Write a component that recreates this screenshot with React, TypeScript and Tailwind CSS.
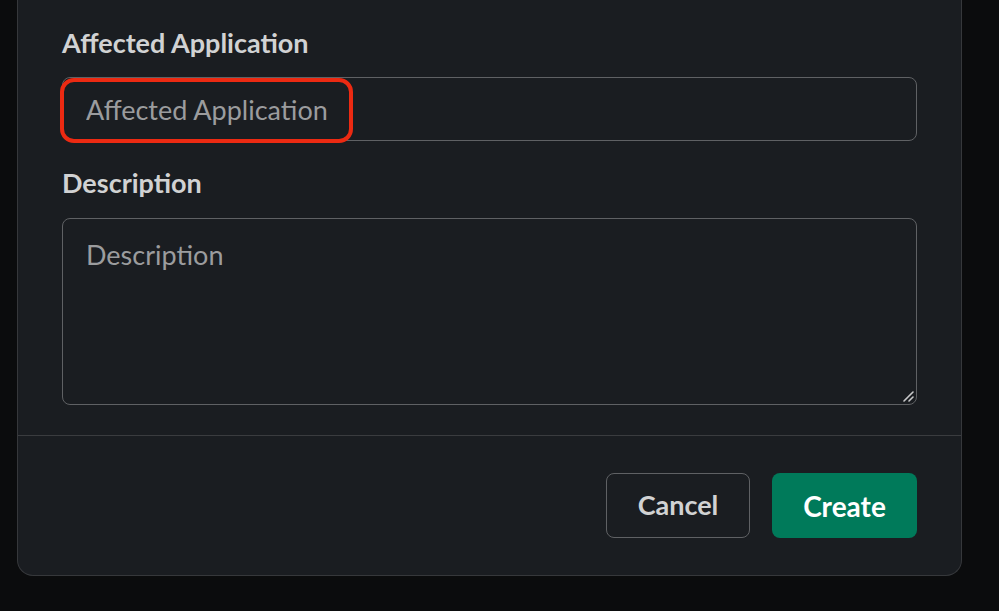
export default function App() {
    return (
        <div
            className="h-[611px] w-[999px] overflow-hidden bg-[#0b0c0d]"
            style={{ fontFamily: 'Lato, "Open Sans", sans-serif' }}
        >
            <div className="ml-[17px] w-[945px] rounded-b-[16px] border-x border-b border-[#36383b] bg-[#1a1d21]">
                <div className="px-[44px] pt-[27px] pb-[30px]">
                    <label className="block text-[27px] leading-[32px] font-bold text-[#d1d2d3]">
                        Affected Application
                    </label>
                    <div className="relative mt-[18px]">
                        <input
                            className="block h-[64px] w-full rounded-[8px] border border-[#5f6164] bg-transparent px-[23px] text-[27px] text-[#d1d2d3] outline-none placeholder:text-[#9b9c9e]"
                            placeholder="Affected Application"
                        />
                        <div className="pointer-events-none absolute top-[1px] left-[-2px] h-[65px] w-[293px] rounded-[14px] border-[4px] border-[#ec2a12]" />
                    </div>
                    <label className="mt-[26px] block text-[27px] leading-[32px] font-bold text-[#d1d2d3]">
                        Description
                    </label>
                    <div className="relative mt-[19px]">
                        <textarea
                            className="block h-[187px] w-full resize-none rounded-[8px] border border-[#5f6164] bg-transparent px-[23px] pt-[20px] text-[27px] leading-[32px] text-[#d1d2d3] outline-none placeholder:text-[#9b9c9e]"
                            placeholder="Description"
                        />
                        <svg
                            className="pointer-events-none absolute right-[3px] bottom-[3px]"
                            width="12"
                            height="12"
                            viewBox="0 0 12 12"
                        >
                            <path d="M11 2 L2 11 M11 7 L7 11" stroke="#c8c9ca" strokeWidth="1.6" strokeLinecap="round" />
                        </svg>
                    </div>
                </div>
                <div className="flex justify-end gap-[22px] border-t border-[#3a3c3f] px-[44px] pt-[37px] pb-[37px]">
                    <button className="h-[65px] w-[144px] rounded-[8px] border border-[#5f6164] text-[27px] font-bold text-[#d1d2d3]">
                        Cancel
                    </button>
                    <button className="h-[65px] w-[145px] rounded-[8px] bg-[#007a5a] text-[28px] font-bold text-white">
                        Create
                    </button>
                </div>
            </div>
        </div>
    )
}
